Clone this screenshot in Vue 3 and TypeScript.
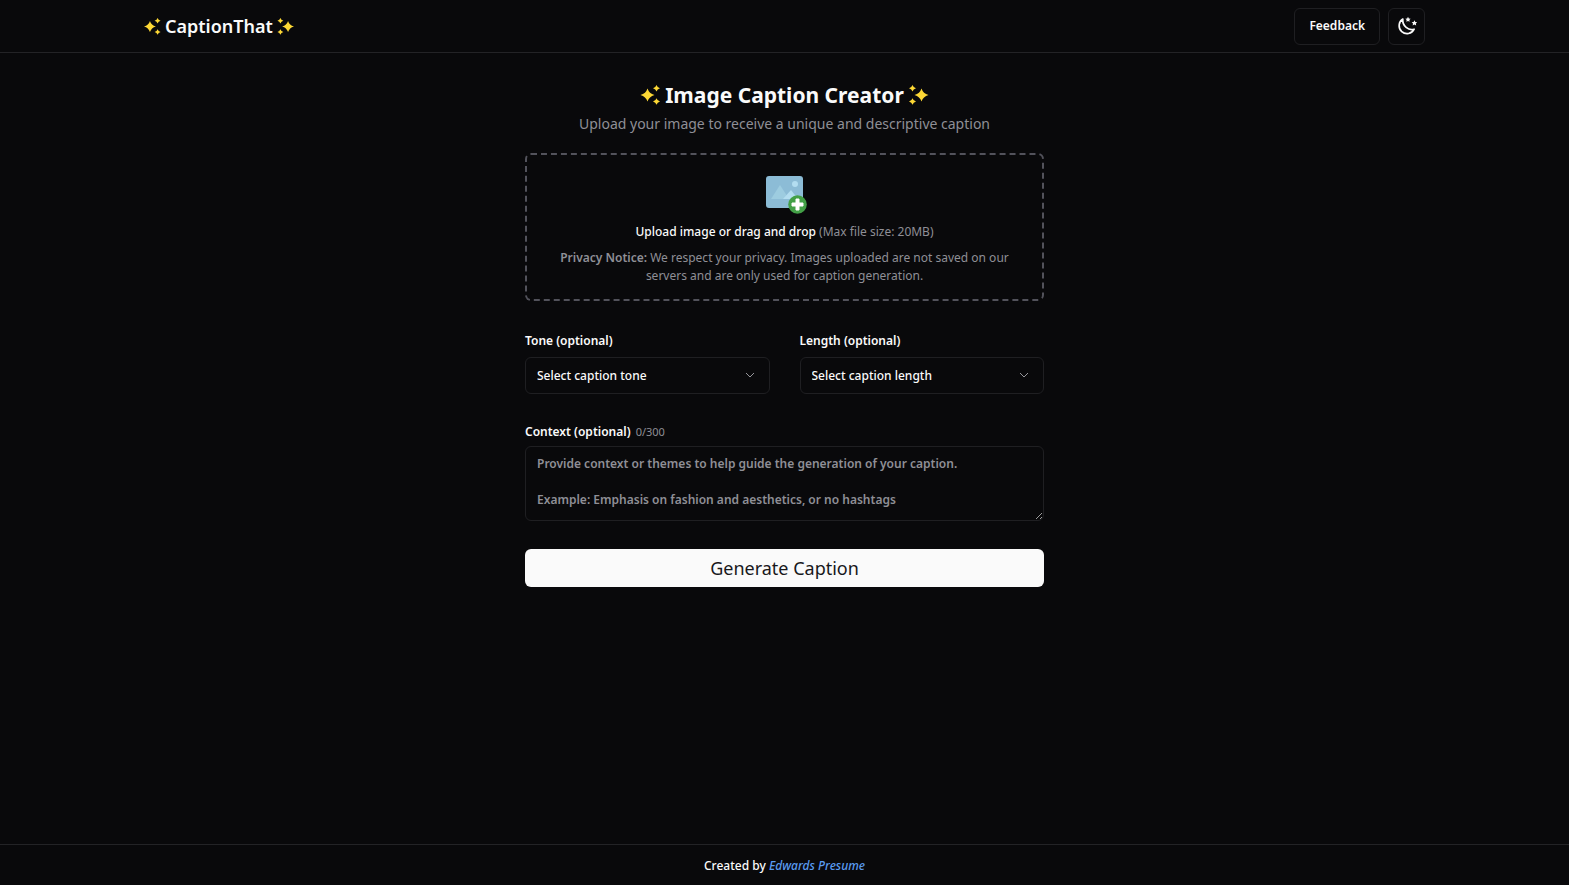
<script setup lang="ts">
import { computed, ref } from 'vue'

interface Choice {
  id: string
  label: string
  prompt: string
  options: string[]
}

const choices: Choice[] = [
  {
    id: 'tone',
    label: 'Tone (optional)',
    prompt: 'Select caption tone',
    options: ['Casual', 'Funny', 'Inspirational', 'Professional'],
  },
  {
    id: 'length',
    label: 'Length (optional)',
    prompt: 'Select caption length',
    options: ['Short', 'Medium', 'Long'],
  },
]

const selected = ref<Record<string, string>>({ tone: '', length: '' })
const context = ref('')
const maxLength = 300
const counter = computed(() => `${context.value.length}/${maxLength}`)
const placeholder =
  'Provide context or themes to help guide the generation of your caption.\n\nExample: Emphasis on fashion and aesthetics, or no hashtags'
</script>

<template>
  <div class="page">
    <svg class="symbols" aria-hidden="true">
      <symbol id="sparkles" viewBox="0 0 20 20">
        <path d="M7 3.4 Q8.6 8.400 14 10 Q8.600 11.600 7 16.600 Q5.400 11.600 0 10 Q5.400 8.400 7 3.400Z" />
        <path d="M16 0 Q16.8 2.500 19.500 3.300 Q16.800 4.100 16 6.600 Q15.200 4.100 12.500 3.300 Q15.200 2.500 16 0Z" />
        <path d="M16 13.200 Q16.800 15.700 19.500 16.500 Q16.800 17.300 16 19.800 Q15.200 17.300 12.500 16.500 Q15.200 15.700 16 13.200Z" />
      </symbol>
    </svg>

    <header class="header">
      <div class="bar">
        <a class="brand" href="#">
          <svg class="spark" aria-hidden="true"><use href="#sparkles" /></svg>
          <span>CaptionThat</span>
          <svg class="spark flipped" aria-hidden="true"><use href="#sparkles" /></svg>
        </a>
        <div class="actions">
          <button class="outline feedback" type="button">Feedback</button>
          <button class="outline theme" type="button" aria-label="Toggle theme">
            <svg viewBox="0 0 24 24" aria-hidden="true">
              <path class="moon" d="M7 3.600 A9.500 9.500 0 1 0 20.600 15.800 C14 18 6 12 7 3.600Z" />
              <path d="M13.200 .8l1 2.100 2.200.3-1.600 1.500.4 2.300-2-1.100-2 1.100.4-2.300-1.600-1.500 2.200-.3z" />
              <path d="M20.900 5l1.100 2.200 2.200.3-1.600 1.600.4 2.300-2.100-1.100-2.100 1.100.4-2.300-1.600-1.600 2.300-.3z" />
            </svg>
          </button>
        </div>
      </div>
    </header>

    <main class="main">
      <h1 class="title">
        <svg class="spark large" aria-hidden="true"><use href="#sparkles" /></svg>
        <span>Image Caption Creator</span>
        <svg class="spark large flipped" aria-hidden="true"><use href="#sparkles" /></svg>
      </h1>
      <p class="subtitle">Upload your image to receive a unique and descriptive caption</p>

      <form class="form" @submit.prevent>
        <label class="dropzone" for="image">
          <input id="image" class="file" type="file" accept="image/*" />
          <svg class="picture" viewBox="0 0 44 44" aria-hidden="true">
            <rect x="3" y="5" width="37" height="32" rx="3" fill="#8cbcd6" />
            <path d="M8 28 L17 14 L26 28Z" fill="#9dcce0" />
            <path d="M20 28 L28 19 L35 28Z" fill="#b3ddf0" />
            <circle cx="32" cy="13" r="3" fill="#b3ddf0" />
            <circle cx="34.500" cy="33.500" r="9.300" fill="#43a047" />
            <path d="M33 28h3v4h4v3h-4v4h-3v-4h-4v-3h4z" fill="#fff" stroke="#fff" />
          </svg>
          <span class="upload">Upload image or drag and drop <span class="muted">(Max file size: 20MB)</span></span>
          <span class="privacy"><strong>Privacy Notice:</strong> We respect your privacy. Images uploaded are not saved on our servers and are only used for caption generation.</span>
        </label>

        <div class="choices">
          <div v-for="choice in choices" :key="choice.id" class="field">
            <label class="label" :for="choice.id">{{ choice.label }}</label>
            <div class="select-wrap">
              <select :id="choice.id" v-model="selected[choice.id]" class="select">
                <option value="">{{ choice.prompt }}</option>
                <option v-for="option in choice.options" :key="option">{{ option }}</option>
              </select>
              <svg class="chevron" viewBox="0 0 14 14" aria-hidden="true"><path d="M3 5l4 4 4-4" /></svg>
            </div>
          </div>
        </div>

        <div class="field context">
          <label class="label" for="context">Context (optional) <span class="counter">{{ counter }}</span></label>
          <textarea
            id="context"
            v-model="context"
            class="textarea"
            rows="3"
            :maxlength="maxLength"
            :placeholder="placeholder"
          ></textarea>
        </div>

        <button class="generate" type="submit">Generate Caption</button>
      </form>
    </main>

    <footer class="footer">
      <p>Created by <a href="#">Edwards Presume</a></p>
    </footer>
  </div>
</template>

<style>
body {
  margin: 0;
  background: #09090b;
}
</style>

<style scoped>
.page {
  display: flex;
  flex-direction: column;
  min-height: 100vh;
  background: #09090b;
  color: #fafafa;
  font-family: "Noto Sans", "Open Sans", sans-serif;
  font-size: 12px;
  line-height: 18px;
}

.page *,
.page *::before {
  box-sizing: border-box;
}

.symbols {
  position: absolute;
  width: 0;
  height: 0;
}

.header {
  border-bottom: 1px solid #232326;
}

.bar {
  display: flex;
  align-items: center;
  justify-content: space-between;
  max-width: 1281px;
  height: 52px;
  margin: 0 auto;
}

.brand {
  display: flex;
  align-items: center;
  gap: 4px;
  color: #fafafa;
  font-size: 18px;
  font-weight: 600;
  line-height: 26px;
  text-decoration: none;
}

.spark {
  width: 17px;
  height: 17px;
  fill: #fdd835;
}

.spark.large {
  width: 21px;
  height: 20px;
}

.flipped {
  transform: scaleX(-1);
}

.actions {
  display: flex;
  gap: 8px;
}

.outline {
  display: flex;
  align-items: center;
  justify-content: center;
  height: 37px;
  padding: 0 14px;
  border: 1px solid #1f1f22;
  border-radius: 6px;
  background: transparent;
  color: #fafafa;
  font: inherit;
  font-weight: 600;
}

.theme {
  width: 37px;
  padding: 0;
}

.theme svg {
  width: 20px;
  height: 20px;
  fill: #fafafa;
  overflow: visible;
}

.theme .moon {
  fill: none;
  stroke: #fafafa;
  stroke-width: 2;
  stroke-linejoin: round;
}

.main {
  flex: 1;
  width: 100%;
  max-width: 519px;
  margin: 0 auto;
  padding: 28px 0;
}

.title {
  display: flex;
  align-items: center;
  justify-content: center;
  gap: 4px;
  margin: 0;
  font-size: 21px;
  font-weight: 700;
  line-height: 28px;
}

.subtitle {
  margin: 4px 0 18px;
  color: #8f8f96;
  font-size: 14px;
  line-height: 22px;
  text-align: center;
}

.form {
  display: flex;
  flex-direction: column;
  gap: 28px;
}

.dropzone {
  display: flex;
  flex-direction: column;
  align-items: center;
  margin-bottom: 2px;
  padding: 16px 28px 14px;
  border: 2px dashed #52525b;
  border-radius: 6px;
  text-align: center;
}

.dropzone:focus-within {
  border-color: #fafafa;
}

.file {
  position: absolute;
  width: 1px;
  height: 1px;
  opacity: 0;
}

.picture {
  width: 44px;
  height: 44px;
}

.upload {
  margin-top: 8px;
  font-weight: 500;
}

.muted {
  color: #8f8f96;
  font-weight: 400;
}

.privacy {
  margin-top: 8px;
  color: #8f8f96;
}

.privacy strong {
  font-weight: 600;
}

.choices {
  display: grid;
  grid-template-columns: 1fr 1fr;
  gap: 30px;
}

.field {
  display: flex;
  flex-direction: column;
  gap: 6px;
}

.field.context {
  gap: 4px;
}

.label {
  font-weight: 600;
  line-height: 20px;
}

.counter {
  margin-left: 2px;
  color: #8f8f96;
  font-size: 11px;
  font-weight: 400;
}

.select-wrap {
  position: relative;
}

.select {
  display: block;
  width: 100%;
  height: 37px;
  padding: 0 36px 0 11px;
  border: 1px solid #1f1f22;
  border-radius: 6px;
  appearance: none;
  background: #09090b;
  color: #fafafa;
  font: inherit;
  font-weight: 500;
}

.chevron {
  position: absolute;
  top: 11px;
  right: 13px;
  width: 14px;
  height: 14px;
  fill: none;
  stroke: #96969b;
  pointer-events: none;
}

.textarea {
  display: block;
  width: 100%;
  height: 75px;
  padding: 8px 11px;
  border: 1px solid #1f1f22;
  border-radius: 6px;
  background: transparent;
  color: #fafafa;
  color-scheme: dark;
  font: inherit;
  font-weight: 600;
  overflow: auto;
  resize: vertical;
}

.textarea::placeholder {
  color: #8f8f96;
}

.generate {
  height: 38px;
  border: 0;
  border-radius: 6px;
  background: #fafafa;
  color: #18181b;
  font: inherit;
  font-size: 18px;
}

.footer {
  padding: 12px 0 10px;
  border-top: 1px solid #232326;
  font-weight: 500;
  text-align: center;
}

.footer p {
  margin: 0;
}

.footer a {
  color: #5a9bf0;
  font-style: italic;
  text-decoration: none;
}
</style>
